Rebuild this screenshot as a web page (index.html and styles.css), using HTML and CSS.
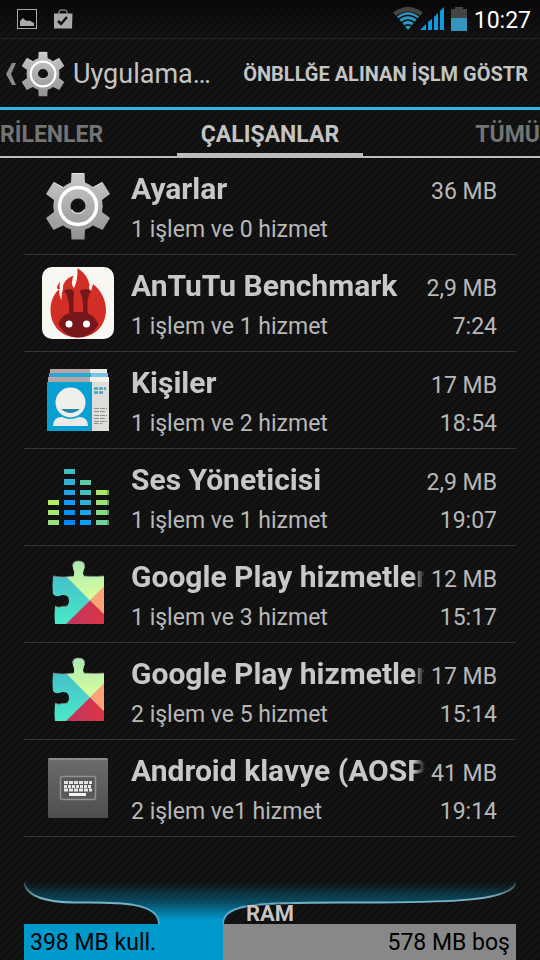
FILE: index.html
```html
<!DOCTYPE html>
<html lang="tr">
<head>
    <meta charset="UTF-8">
    <meta name="viewport" content="width=device-width, initial-scale=1.0">
    <title>Uygulamalar</title>
    <link rel="stylesheet" href="styles.css">
</head>
<body>
    <!-- Shared shapes -->
    <svg class="defs" width="0" height="0" aria-hidden="true">
        <defs>
            <linearGradient id="metal" x1="0" y1="0" x2="0" y2="1">
                <stop offset="0" stop-color="#c9c9c9"/>
                <stop offset="1" stop-color="#929292"/>
            </linearGradient>
            <linearGradient id="teal" x1="0" y1="0" x2="0" y2="1">
                <stop offset="0.200" stop-color="#46bccb"/>
                <stop offset="1" stop-color="#4aefc6"/>
            </linearGradient>
            <linearGradient id="lime" x1="0" y1="0" x2="0" y2="1">
                <stop offset="0" stop-color="#a6e8b4"/>
                <stop offset="1" stop-color="#dcff9c"/>
            </linearGradient>
            <linearGradient id="red" x1="0" y1="0" x2="1" y2="0">
                <stop offset="0" stop-color="#b93667"/>
                <stop offset="1" stop-color="#e5343b"/>
            </linearGradient>
            <linearGradient id="key" x1="0" y1="0" x2="0" y2="1">
                <stop offset="0" stop-color="#6c6c6c"/>
                <stop offset="1" stop-color="#4e4e4e"/>
            </linearGradient>
            <clipPath id="piece">
                <path d="M11 18Q21 20 32 18Q33 14 31 10Q29 3 36.500 3Q44 3 42.500 10Q40 15 42 18Q52 19 62 18V66H13Q12 58 13 48Q16 50 20 48.500Q27 49 27 43Q27 36 20 37Q14 40 11 36Q10 28 11 18Z"/>
            </clipPath>
        </defs>
        <symbol id="gear" viewBox="0 0 72 72">
            <path fill="url(#metal)" fill-rule="evenodd" d="M29.500 3H42.500L43 12.500Q47.500 14 51 17L60.500 12L68 24L60 30Q61.500 36 60 42L68 48L60.500 60L51 55.500Q47 58.500 43 59.500L42.500 69.500H29.500L29 59.500Q25 58.500 21 55.500L11.500 60L4 48L12 42Q10.500 36 12 30L4 24L11.500 12L21 17Q24.500 14 29 12.500ZM36 28.500A7.500 7.500 0 1 0 36 43.500A7.500 7.500 0 1 0 36 28.500Z"/>
            <path d="M30 3.500H42M12 12.500L21 17.500M60 12.500L51 17.500" stroke="#e4e4e4" fill="none"/>
            <circle cx="36" cy="36" r="18.500" fill="none" stroke="#fff" stroke-width="3.500"/>
            <path d="M29.500 39.500A7.500 7.500 0 0 0 42.500 39.500" fill="none" stroke="#ddd" stroke-width="1.500"/>
        </symbol>
        <symbol id="puzzle" viewBox="0 0 72 72">
            <g clip-path="url(#piece)">
                <rect width="72" height="72" fill="url(#teal)"/>
                <path d="M6 0H72V19L48 42.500Z" fill="url(#lime)"/>
                <path d="M48 42.500L72 18V67Z" fill="#ffa276"/>
                <path d="M48 42.500L72 66V70H20L24 66Z" fill="url(#red)"/>
            </g>
            <path d="M11 18Q21 20 32 18M31 9Q30 3 36.500 3Q43 3 42.500 9M42 18Q52 19 62 18M13 48Q16 50 20 48.500L26 48" stroke="#8a7b76" stroke-opacity="0.700" fill="none"/>
        </symbol>
    </svg>

    <div class="status-bar">
        <svg class="status-icon" width="20" height="20" viewBox="0 0 20 20">
            <rect x="0.500" y="0.500" width="19" height="19" fill="#080808" stroke="#aaa"/>
            <path d="M3 17V12L6 9L8 11L10 12L13 11.500L15 13L17 14V17Z" fill="#aaa"/>
        </svg>
        <svg class="status-icon" width="20" height="20" viewBox="0 0 20 20">
            <path d="M6 5V3Q6 1 8 1H12Q14 1 14 3V5" fill="none" stroke="#aaa"/>
            <path d="M1 4.500H19.500L19 19.500H1Z" fill="#aaa"/>
            <path d="M5 12L8 15L14 8" fill="none" stroke="#111" stroke-width="2.500"/>
        </svg>
        <div class="status-right">
            <svg width="51" height="24" viewBox="0 0 51 24">
                <path d="M0 5.500Q15 -5.500 30 5.500L27 9Q15 0 3 9Z" fill="#444"/>
                <path d="M4 9.500Q15 1 26 9.500L15 23Z" fill="#2d94bd"/>
                <path d="M5 12.500Q15 4.500 25 12.500M8 16Q15 10 22 16M11 19.500Q15 16 19 19.500" fill="none" stroke="#111" stroke-width="1.500"/>
                <path d="M27 23L33 17V23ZM35 23V15L39 12V23ZM41 23V10L45 6V23ZM47 23V4L51 0V23Z" fill="#0f9bdf"/>
            </svg>
            <svg width="16" height="24" viewBox="0 0 16 24">
                <path d="M0 2H4V0H12V2H16V11H0Z" fill="#444"/>
                <rect y="11" width="16" height="13" fill="#3395bb"/>
            </svg>
            <span class="clock">10:27</span>
        </div>
    </div>

    <header class="action-bar">
        <button class="up" aria-label="Geri">
            <svg width="10" height="22" viewBox="0 0 10 22"><path d="M6 0H10L5 11L10 22H6L0 11Z" fill="#8c8c8c"/></svg>
            <svg width="48" height="48"><use href="#gear"/></svg>
        </button>
        <h1>Uygulama…</h1>
        <button class="action">ÖNBLLĞE ALINAN İŞLM GÖSTR</button>
    </header>

    <nav class="tabs">
        <button class="tab tab-left">RİLENLER</button>
        <button class="tab active">ÇALIŞANLAR</button>
        <button class="tab tab-right">TÜMÜ</button>
    </nav>

    <main>
        <ul class="apps">
            <li class="app">
                <svg class="app-icon" viewBox="0 0 72 72"><use href="#gear"/></svg>
                <div class="app-info">
                    <div class="line"><span class="name">Ayarlar</span><span class="size">36 MB</span></div>
                    <div class="line"><span class="detail">1 işlem ve 0 hizmet</span></div>
                </div>
            </li>
            <li class="app">
                <svg class="app-icon" viewBox="0 0 72 72">
                    <rect width="72" height="72" rx="10" fill="#f8f7f2"/>
                    <path d="M36 70.500C19 70.500 8.500 58 8.500 43C8.500 34 12 27 17 22Q17 29 19.500 33Q19 27 21 22Q20 13 31.500 8.500Q28 17 32 21Q36 13 35.500 1Q46 8 47.500 18Q46 21 49 24L51 17C60 24 64 34 64 43C64 58 53 70.500 36 70.500Z" fill="#d22e26"/>
                    <path d="M18 15Q14 19 15.500 22L18 22Q17 19 18 15Z" fill="#d22e26"/>
                    <path d="M16.500 57Q20 45 36 45Q52 45 56.500 58Q49 70 36 70.500Q23 70 16.500 57Z" fill="#76171b"/>
                    <path d="M22 24Q27 20 32 24Q31 34 31.500 46H27Q28 31 22 24ZM37.500 24Q43 20 49 24Q44 31 46 47H41Q42 31 37.500 24Z" fill="#76171b"/>
                    <circle cx="27" cy="57" r="3.500" fill="#fff"/>
                    <circle cx="44.500" cy="57" r="3.500" fill="#fff"/>
                </svg>
                <div class="app-info">
                    <div class="line"><span class="name">AnTuTu Benchmark</span><span class="size">2,9 MB</span></div>
                    <div class="line"><span class="detail">1 işlem ve 1 hizmet</span><span class="time">7:24</span></div>
                </div>
            </li>
            <li class="app">
                <svg class="app-icon" viewBox="0 0 72 72">
                    <path d="M8 5H48V9H8Z" fill="#b2a7a4"/>
                    <path d="M48 5H65V9H48Z" fill="#eceae7"/>
                    <path d="M7 9H66V13H7Z" fill="#2ba6d5"/>
                    <path d="M49 9H66V13H49Z" fill="#7bc3e0"/>
                    <path d="M6 13H48V19H6Z" fill="#b2a7a4"/>
                    <path d="M48 13H67V19H48Z" fill="#f2f0ec"/>
                    <rect x="5" y="18" width="45" height="49" fill="#089fd2"/>
                    <rect x="50" y="18" width="17" height="49" fill="#dfddda"/>
                    <path d="M11 62Q11 53 20 53Q28 57 37 53Q46 53 46 62Z" fill="#eceae6"/>
                    <circle cx="28.500" cy="38.500" r="15" fill="#f1efeb"/>
                    <path d="M19 45H38Q28.500 53 19 45Z" fill="#2788aa"/>
                    <path d="M52 24.500H64M52 28.500H62" stroke="#3da3c6" stroke-width="2.500" stroke-dasharray="4 1"/>
                    <path d="M52 44.500H65M52 47.500H63M52 51.500H65M52 54.500H64M52 57.500H65M52 59.500H60" stroke="#8e8e8e" stroke-dasharray="5 1"/>
                </svg>
                <div class="app-info">
                    <div class="line"><span class="name">Kişiler</span><span class="size">17 MB</span></div>
                    <div class="line"><span class="detail">1 işlem ve 2 hizmet</span><span class="time">18:54</span></div>
                </div>
            </li>
            <li class="app">
                <svg class="app-icon" viewBox="0 0 72 72">
                    <path d="M6 39H17V44H6Z" fill="#b6ee5f"/>
                    <path d="M6 49H17V54H6Z" fill="#a6e86f"/>
                    <path d="M6 59H17V64H6Z" fill="#97e07e"/>
                    <path d="M22 8H33V13H22Z" fill="#43bdc2"/>
                    <path d="M22 18H33V24H22Z" fill="#30b1d4"/>
                    <path d="M22 29H33V34H22Z" fill="#1da7e9"/>
                    <path d="M22 39H33V44H22Z" fill="#0d9efb"/>
                    <path d="M22 49H33V54H22Z" fill="#0094ff"/>
                    <path d="M22 59H33V64H22Z" fill="#0086ff"/>
                    <path d="M38 19H49V24H38Z" fill="#5bcaa7"/>
                    <path d="M38 29H49V34H38Z" fill="#45bfbf"/>
                    <path d="M38 39H49V44H38Z" fill="#30b1d4"/>
                    <path d="M38 49H49V54H38Z" fill="#1da7e9"/>
                    <path d="M38 59H49V64H38Z" fill="#0d9efb"/>
                    <path d="M54 29H67V34H54Z" fill="#ace866"/>
                    <path d="M54 39H67V44H54Z" fill="#9be277"/>
                    <path d="M54 49H67V54H54Z" fill="#86da88"/>
                    <path d="M54 59H67V64H54Z" fill="#70d29b"/>
                    <path d="M66 29V34M66 39V44M66 49V54M66 59V64" stroke="#3f6b3f" stroke-width="1"/>
                </svg>
                <div class="app-info">
                    <div class="line"><span class="name">Ses Yöneticisi</span><span class="size">2,9 MB</span></div>
                    <div class="line"><span class="detail">1 işlem ve 1 hizmet</span><span class="time">19:07</span></div>
                </div>
            </li>
            <li class="app">
                <svg class="app-icon" viewBox="0 0 72 72"><use href="#puzzle"/></svg>
                <div class="app-info">
                    <div class="line"><span class="name">Google Play hizmetler</span><span class="size">12 MB</span></div>
                    <div class="line"><span class="detail">1 işlem ve 3 hizmet</span><span class="time">15:17</span></div>
                </div>
            </li>
            <li class="app">
                <svg class="app-icon" viewBox="0 0 72 72"><use href="#puzzle"/></svg>
                <div class="app-info">
                    <div class="line"><span class="name">Google Play hizmetler</span><span class="size">17 MB</span></div>
                    <div class="line"><span class="detail">2 işlem ve 5 hizmet</span><span class="time">15:14</span></div>
                </div>
            </li>
            <li class="app">
                <svg class="app-icon" viewBox="0 0 72 72">
                    <rect x="6" y="6" width="60" height="60" rx="1" fill="url(#key)"/>
                    <path d="M7 7H65" stroke="#8c8c8c" stroke-width="2"/>
                    <rect x="18.500" y="24.500" width="35" height="23" rx="2" fill="#585858" stroke="#929292" stroke-width="1.500"/>
                    <path d="M22 30.500H50M22 38H50" stroke="#e6e6e6" stroke-width="3" stroke-dasharray="4 1"/>
                    <path d="M22 34.500H50" stroke="#e6e6e6" stroke-width="3" stroke-dasharray="3 1"/>
                    <path d="M27 42.500H44" stroke="#f2f2f2" stroke-width="3"/>
                </svg>
                <div class="app-info">
                    <div class="line"><span class="name">Android klavye (AOSP</span><span class="size">41 MB</span></div>
                    <div class="line"><span class="detail">2 işlem ve1 hizmet</span><span class="time">19:14</span></div>
                </div>
            </li>
        </ul>
    </main>

    <footer class="memory">
        <div class="memory-top">
            <svg class="curve" viewBox="0 0 492 42" preserveAspectRatio="none">
                <defs>
                    <linearGradient id="glow" x1="0" y1="0" x2="0" y2="1">
                        <stop offset="0" stop-color="#0099cc" stop-opacity="0"/>
                        <stop offset="0.500" stop-color="#0099cc" stop-opacity="0.450"/>
                        <stop offset="0.900" stop-color="#0099cc"/>
                    </linearGradient>
                    <linearGradient id="edge" x1="0" y1="0" x2="0" y2="1">
                        <stop offset="0" stop-color="#7fb4c6" stop-opacity="0.200"/>
                        <stop offset="0.400" stop-color="#7fb4c6"/>
                        <stop offset="1" stop-color="#3fa6cb"/>
                    </linearGradient>
                </defs>
                <path d="M0 0C2 14 20 20 50 20.500C80 21 135 17 135 42H199C199 18 250 21 350 20.500C420 20 488 20 492 0Z" fill="url(#glow)"/>
                <path d="M0 0C2 14 20 20 50 20.500C80 21 135 17 135 42M199 42C199 18 250 21 350 20.500C420 20 488 20 492 0" fill="none" stroke="url(#edge)" stroke-width="2"/>
            </svg>
            <span class="memory-label">RAM</span>
        </div>
        <div class="memory-bar">
            <span class="used" style="width: 40.5%">398 MB kull.</span>
            <span class="free">578 MB boş</span>
        </div>
    </footer>
</body>
</html>
```

FILE: styles.css
```css
* {
    box-sizing: border-box;
}

body {
    margin: 0;
    min-height: 100vh;
    display: flex;
    flex-direction: column;
    font-family: Roboto, "Noto Sans", sans-serif;
    color: #c4c4c4;
    background-color: #131313;
    background-image: linear-gradient(135deg, transparent 45%, #080808 46%, #080808 54%, transparent 55%);
    background-size: 8px 8px;
    overflow-x: hidden;
}

button {
    border: none;
    background: none;
    padding: 0;
    color: inherit;
    font-family: inherit;
    cursor: pointer;
}

.defs {
    position: absolute;
}

/* Status bar */
.status-bar {
    display: flex;
    align-items: center;
    gap: 16px;
    height: 39px;
    padding: 0 9px 0 17px;
    background: linear-gradient(rgba(0, 0, 0, 0.6), transparent);
    border-bottom: 1px solid #222;
}

.status-right {
    display: flex;
    align-items: center;
    gap: 7px;
    margin-left: auto;
}

.clock {
    font-size: 23px;
    line-height: 34px;
    padding-top: 4px;
    color: #fff;
}

/* Action bar */
.action-bar {
    display: flex;
    align-items: center;
    height: 71px;
    padding: 2px 12px 0 6px;
    border-bottom: 3px solid #33b5e5;
}

.up {
    display: flex;
    align-items: center;
    gap: 3px;
}

h1 {
    margin: 0;
    padding-left: 6px;
    font-size: 27px;
    font-weight: 400;
}

.action {
    margin-left: auto;
    font-size: 20px;
    font-weight: 700;
    white-space: nowrap;
}

/* Tabs */
.tabs {
    display: grid;
    grid-template-columns: 1fr 186px 1fr;
    height: 48px;
    border-bottom: 2px solid #bdbdbd;
}

.tab {
    padding-top: 2px;
    font-size: 23px;
    font-weight: 700;
    color: #747474;
}

.tab-left {
    text-align: left;
}

.tab-right {
    text-align: right;
}

.tab.active {
    color: #c4c4c4;
    box-shadow: inset 0 -3px #bdbdbd;
}

/* Running apps */
.apps {
    list-style: none;
    margin: 0 24px;
    padding: 0;
}

.app {
    display: flex;
    gap: 17px;
    padding: 0 19px 0 18px;
    border-bottom: 1px solid #333;
}

.app-icon {
    flex: none;
    width: 72px;
    height: 72px;
    margin: 12px 0;
}

.app-info {
    flex: 1;
    min-width: 0;
    padding-top: 13px;
}

.line {
    display: flex;
    align-items: baseline;
    gap: 6px;
    font-size: 23px;
    line-height: 38px;
}

.name {
    flex: 1;
    overflow: hidden;
    white-space: nowrap;
    font-size: 30px;
    line-height: 36px;
    font-weight: 700;
    color: #c8c8c8;
    -webkit-mask-image: linear-gradient(to left, transparent, #000 12px);
    mask-image: linear-gradient(to left, transparent, #000 12px);
}

.detail {
    flex: 1;
}

.size,
.detail,
.time {
    color: #b8b8b8;
}

/* RAM usage */
.memory {
    margin: auto 24px 0;
}

.memory-top {
    display: grid;
    justify-items: center;
    align-items: end;
}

.curve,
.memory-label {
    grid-area: 1 / 1;
}

.curve {
    width: 100%;
    height: 42px;
}

.memory-label {
    font-size: 22px;
    font-weight: 700;
    line-height: 20px;
    text-shadow: 0 0 3px #000;
}

.memory-bar {
    display: flex;
    height: 36px;
    font-size: 23px;
    line-height: 38px;
    color: #000;
    background-color: #888;
}

.used {
    padding-left: 6px;
    background-color: #0099cc;
}

.free {
    margin-left: auto;
    padding-right: 6px;
}
```
